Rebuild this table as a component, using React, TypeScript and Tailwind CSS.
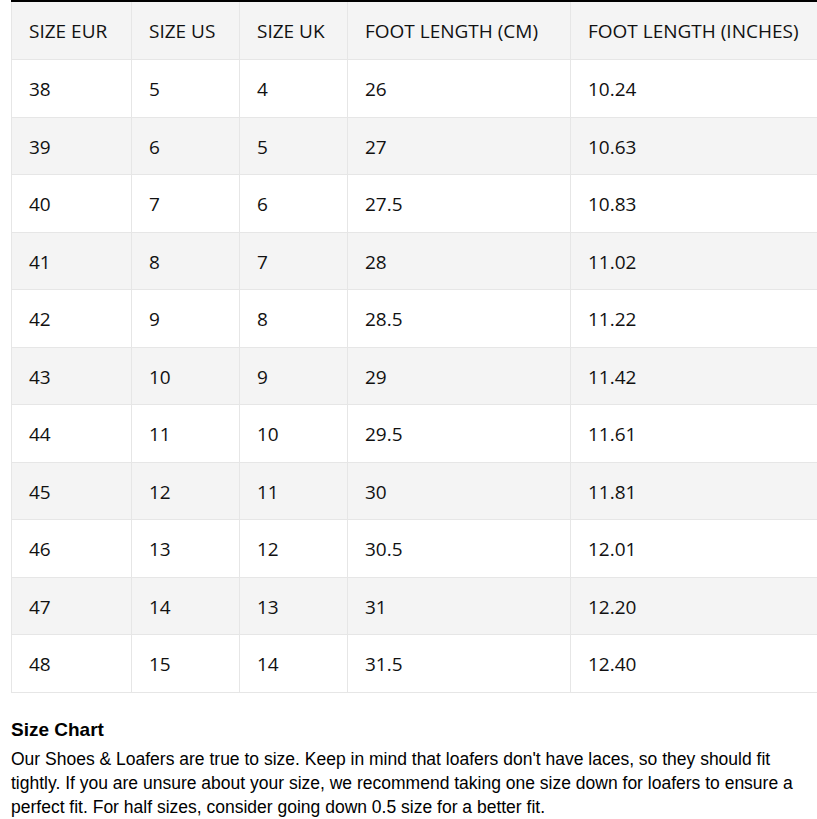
import React from "react";

const rows: string[][] = [
  ["38", "5", "4", "26", "10.24"],
  ["39", "6", "5", "27", "10.63"],
  ["40", "7", "6", "27.5", "10.83"],
  ["41", "8", "7", "28", "11.02"],
  ["42", "9", "8", "28.5", "11.22"],
  ["43", "10", "9", "29", "11.42"],
  ["44", "11", "10", "29.5", "11.61"],
  ["45", "12", "11", "30", "11.81"],
  ["46", "13", "12", "30.5", "12.01"],
  ["47", "14", "13", "31", "12.20"],
  ["48", "15", "14", "31.5", "12.40"],
];

const headers = ["SIZE EUR", "SIZE US", "SIZE UK", "FOOT LENGTH (CM)", "FOOT LENGTH (INCHES)"];
const widths = ["w-[120px]", "w-[108px]", "w-[108px]", "w-[223px]", "w-[247px]"];

export default function App() {
  return (
    <div className="bg-white min-h-[819px] pl-[11px] text-black">
      <div className="w-[806px] h-[2px] bg-black" />
      <table
        className="w-[806px] table-fixed border-collapse text-[19px] text-[#111]"
        style={{ fontFamily: '"Open Sans", "Noto Sans", sans-serif' }}
      >
        <colgroup>
          {widths.map((w, i) => (
            <col key={i} className={w} />
          ))}
        </colgroup>
        <thead>
          <tr className="h-[57.5px] bg-[#f4f4f4]">
            {headers.map((h) => (
              <th
                key={h}
                className="border border-t-0 border-[#e6e6e6] px-[17px] pt-[2px] text-left font-normal whitespace-nowrap"
              >
                {h}
              </th>
            ))}
          </tr>
        </thead>
        <tbody>
          {rows.map((r, i) => (
            <tr key={i} className={`h-[57.5px] ${i % 2 === 1 ? "bg-[#f4f4f4]" : "bg-white"}`}>
              {r.map((c, j) => (
                <td key={j} className="border border-[#e6e6e6] px-[17px] pt-[2px] text-left">
                  {c}
                </td>
              ))}
            </tr>
          ))}
        </tbody>
      </table>
      <div
        className="mt-[25px] pr-[20px] text-[17.5px] leading-[24px] text-black"
        style={{ fontFamily: '"Liberation Sans", Arial, sans-serif' }}
      >
        <h3 className="font-bold text-[19px] leading-[24px]">Size Chart</h3>
        <p className="mt-[5px]">
          Our Shoes &amp; Loafers are true to size. Keep in mind that loafers don't have laces, so they should fit
          tightly. If you are unsure about your size, we recommend taking one size down for loafers to ensure a
          perfect fit. For half sizes, consider going down 0.5 size for a better fit.
        </p>
      </div>
    </div>
  );
}
